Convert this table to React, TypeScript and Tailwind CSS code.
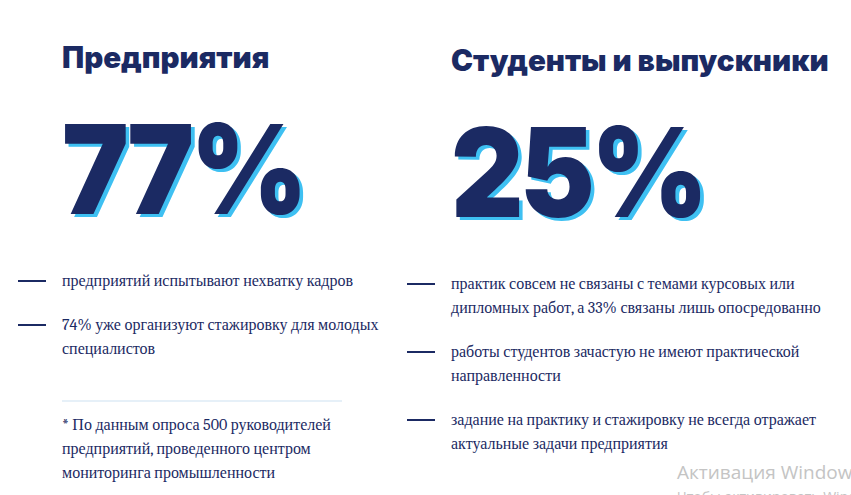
import React from "react";

const navy = "text-[#1b2a63]";
const serif = "font-serif [font-family:Liberation_Serif,Times_New_Roman,serif]";

function Item({ children }: { children: React.ReactNode }) {
  return (
    <li className="flex items-start">
      <span className="mt-[11px] ml-[-44px] mr-[16px] h-[2px] w-[28px] shrink-0 bg-[#1b2a63]" />
      <span className={`${serif} text-[16px] leading-[24px] text-[#1b2a63]`}>{children}</span>
    </li>
  );
}

function Big({ children }: { children: React.ReactNode }) {
  return (
    <div
      className={`mt-[34px] origin-left scale-x-[0.905] font-['Inter',sans-serif] text-[124px] leading-none font-black tracking-[-4px] ${navy} [text-shadow:4px_3px_0_#3ec0f2]`}
    >
      {children}
    </div>
  );
}

function Heading({ children }: { children: React.ReactNode }) {
  return (
    <h2 className={`font-['Inter',sans-serif] text-[29.5px] leading-none font-black ${navy}`}>
      {children}
    </h2>
  );
}

export default function App() {
  return (
    <div className="relative h-[495px] w-[851px] overflow-hidden bg-white">
      <div className="grid grid-cols-[389px_389px] pl-[62px] pt-[43px]">
        <div>
          <Heading>Предприятия</Heading>
          <Big>77%</Big>
          <ul className="mt-[38px] flex flex-col gap-[20px]">
            <Item>предприятий испытывают нехватку кадров</Item>
            <Item>74% уже организуют стажировку для молодых специалистов</Item>
          </ul>
          <div className="mt-[39px] h-[2px] w-[280px] bg-[#e6f0f8]" />
          <p className={`mt-[11px] w-[280px] ${serif} text-[16px] leading-[24px] text-[#1b2a63]`}>
            * По данным опроса 500 руководителей предприятий, проведенного центром мониторинга промышленности
          </p>
        </div>
        <div className="mt-[3px]">
          <Heading>Студенты и выпускники</Heading>
          <Big>25%</Big>
          <ul className="mt-[38px] flex flex-col gap-[20px]">
            <Item>практик совсем не связаны с темами курсовых или дипломных работ, а 33% связаны лишь опосредованно</Item>
            <Item>работы студентов зачастую не имеют практической направленности</Item>
            <Item>задание на практику и стажировку не всегда отражает актуальные задачи предприятия</Item>
          </ul>
        </div>
      </div>
      <div className="pointer-events-none absolute left-[677px] top-[457px] whitespace-nowrap font-['Open_Sans',sans-serif] text-[#c4c4c4]">
        <div className="text-[19px] leading-[30px]">Активация Windows</div>
        <div className="text-[14px] leading-[20px]">Чтобы активировать Windows, перейдите в раздел</div>
      </div>
    </div>
  );
}
